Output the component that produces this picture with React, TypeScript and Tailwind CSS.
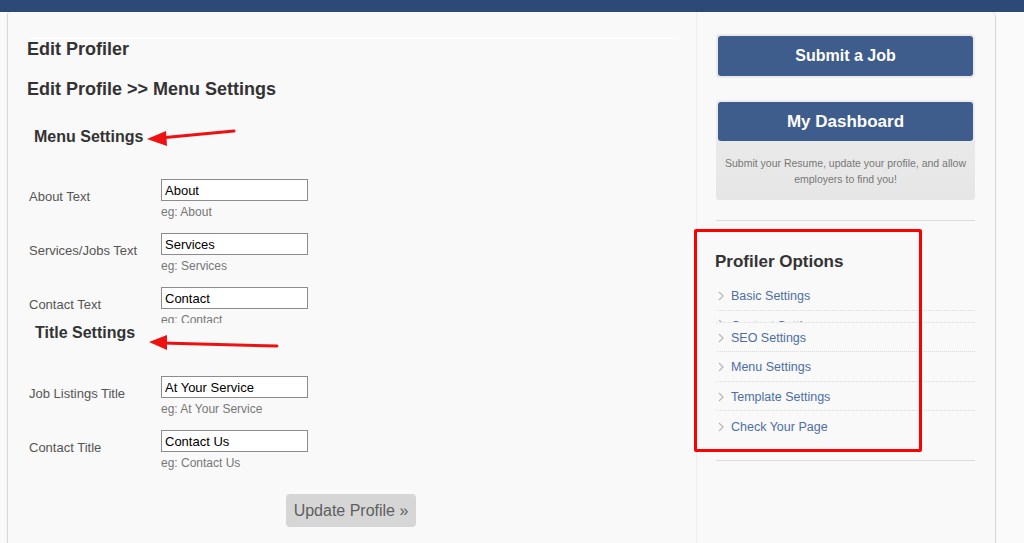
import React from "react";

const menuRows = [
  { label: "About Text", value: "About", hint: "eg: About" },
  { label: "Services/Jobs Text", value: "Services", hint: "eg: Services" },
  { label: "Contact Text", value: "Contact", hint: "eg: Contact" },
];

const titleRows = [
  { label: "Job Listings Title", value: "At Your Service", hint: "eg: At Your Service" },
  { label: "Contact Title", value: "Contact Us", hint: "eg: Contact Us" },
];

function FieldRow({ label, value, hint }: { label: string; value: string; hint: string }) {
  return (
    <div className="flex h-[54px] shrink-0">
      <div className="w-[132px] pt-[10px] text-[13px] leading-[16px] text-[#555]">{label}</div>
      <div className="flex flex-col">
        <input
          type="text"
          defaultValue={value}
          className="w-[147px] h-[22px] border border-[#8c8c8c] bg-white px-[3px] text-[13px] text-black outline-none"
        />
        <span className="mt-[4px] text-[12px] leading-[14px] text-[#777]">{hint}</span>
      </div>
    </div>
  );
}

function Chevron() {
  return (
    <svg width="6" height="10" viewBox="0 0 6 10" className="shrink-0">
      <polyline points="1,1 5,5 1,9" fill="none" stroke="#bbb" strokeWidth="1.3" />
    </svg>
  );
}

const options = ["Basic Settings", "Contact Settings", "SEO Settings", "Menu Settings", "Template Settings", "Check Your Page"];

export default function App() {
  return (
    <div
      className="relative w-[1024px] h-[543px] overflow-hidden bg-[#fafafa]"
      style={{ fontFamily: '"Liberation Sans", Arial, sans-serif' }}
    >
      <div className="h-[12px] bg-[#2d4a77]" />
      <div className="flex h-[531px]">
        <div className="w-[7px]" />
        <div className="flex w-[989px] rounded-tr-[5px] rounded-tl-[3px] border-l border-r border-[#d8d8d8] bg-[#f9f9f9] shadow-[0_1px_2px_rgba(0,0,0,0.08)]">
          {/* left column */}
          <div className="flex w-[689px] flex-col border-r border-[#eeeeee] pl-[19px]">
            <div className="mt-[26px] mr-[20px] border-t border-white">
              <h1 className="text-[18px] font-bold leading-[20px] text-[#333]">Edit Profiler</h1>
            </div>
            <h2 className="mt-[20px] text-[18px] font-bold leading-[20px] text-[#333]">
              Edit Profile &gt;&gt; Menu Settings
            </h2>
            <h3 className="mt-[28px] pl-[7px] text-[16px] font-bold leading-[19px] text-[#333]">Menu Settings</h3>
            <div className="mt-[33px] flex h-[144px] flex-col overflow-hidden pl-[2px]">
              {menuRows.map((r) => (
                <FieldRow key={r.label} {...r} />
              ))}
            </div>
            <h3 className="pl-[8px] text-[16px] font-bold leading-[19px] text-[#333]">Title Settings</h3>
            <div className="mt-[34px] flex flex-col pl-[2px]">
              {titleRows.map((r) => (
                <FieldRow key={r.label} {...r} />
              ))}
            </div>
            <div className="mt-[10px] flex justify-center pr-[21px]">
              <button className="h-[33px] w-[130px] rounded-[4px] bg-[#d6d6d6] text-[16px] text-[#5e5e5e]">
                Update Profile »
              </button>
            </div>
          </div>

          {/* sidebar */}
          <div className="flex flex-1 flex-col pl-[19px]">
            <div className="mt-[22px] w-[259px] rounded-[4px] bg-[#e9e9e9] p-[2px]">
              <button className="flex h-[40px] w-full items-center justify-center rounded-[3px] bg-[#3e5c8c] text-[16px] font-bold text-white">
                Submit a Job
              </button>
            </div>
            <div className="mt-[22px] w-[259px] rounded-[4px] bg-gradient-to-b from-[#ececec] to-[#e6e6e6] p-[2px] pb-[13px]">
              <button className="flex h-[39px] w-full items-center justify-center rounded-[3px] bg-[#3e5c8c] pt-[1px] text-[17px] font-bold text-white">
                My Dashboard
              </button>
              <p className="mt-[14px] px-[2px] text-center text-[10.5px] leading-[16px] text-[#777]">
                Submit your Resume, update your profile, and allow employers to find you!
              </p>
            </div>
            <div className="mt-[20px] w-[259px] border-t border-[#dddddd]" />
            <h3 className="mt-[31px] -ml-[1px] text-[17px] font-bold leading-[19px] text-[#333]">
              Profiler Options
            </h3>
            <ul className="mt-[10px] w-[259px]">
              {options.map((o, i) => (
                <li
                  key={o}
                  className={
                    (i === 1
                      ? "h-[12px] overflow-hidden items-start pt-[8px] "
                      : "h-[29.5px] items-center pt-[2px] ") +
                    (i === options.length - 1 ? "" : "border-b border-dotted border-[#dcdcdc] ") +
                    "flex gap-[7px] pl-[2px]"
                  }
                >
                  <Chevron />
                  <span className="text-[12.5px] leading-[14px] text-[#4d6ea3]">{o}</span>
                </li>
              ))}
            </ul>
            <div className="mt-[19px] w-[259px] border-t border-[#dddddd]" />
          </div>
        </div>
        <div className="flex-1" />
      </div>

      {/* annotations */}
      <div className="absolute left-[694px] top-[229px] h-[223px] w-[228px] rounded-[2px] border-[3px] border-[#ff0000]" />
      <svg className="absolute left-0 top-0" width="1024" height="543" viewBox="0 0 1024 543">
        <line x1="234" y1="131" x2="160" y2="138" stroke="#ee1111" strokeWidth="3" strokeLinecap="round" />
        <polygon points="147,139 166,131 167,146" fill="#ee1111" />
        <line x1="277" y1="346" x2="162" y2="343" stroke="#ee1111" strokeWidth="3" strokeLinecap="round" />
        <polygon points="149,342 167,335 167,350" fill="#ee1111" />
      </svg>
    </div>
  );
}
